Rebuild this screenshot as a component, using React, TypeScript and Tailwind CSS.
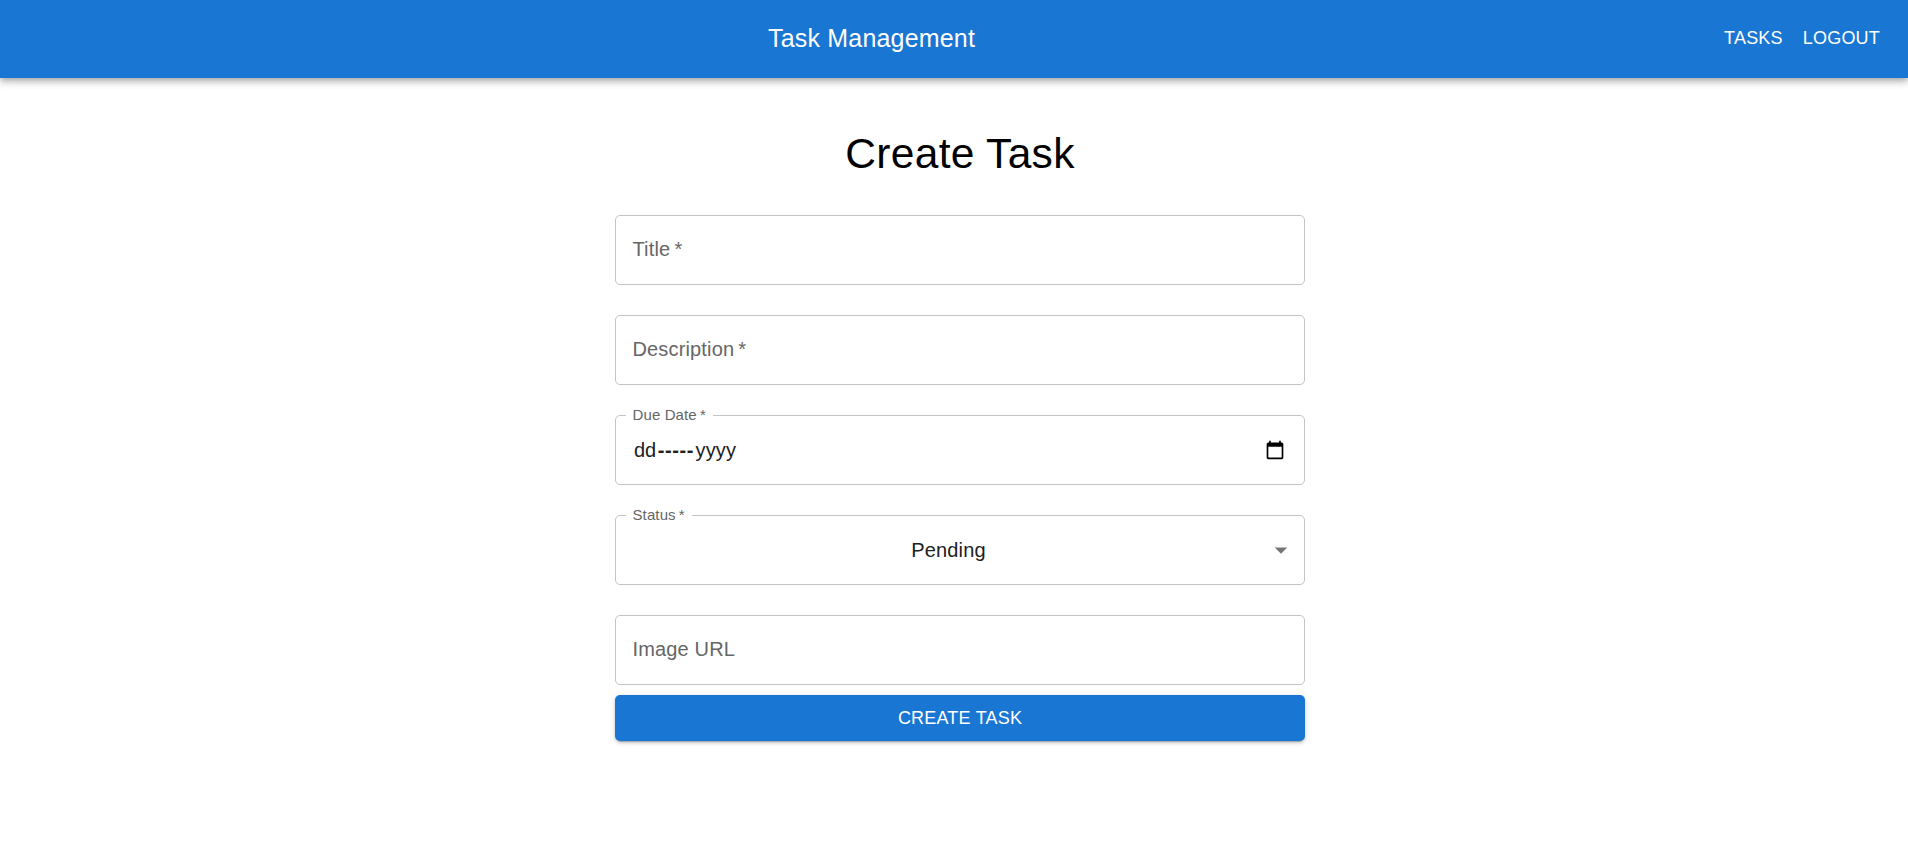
import type { ReactNode } from "react";

function Label({ text, required }: { text: string; required?: boolean }) {
  return (
    <span className="text-[20px] leading-[29px] tracking-[0.15px] text-[#666666]">
      {text}
      {required && <span>&thinsp;*</span>}
    </span>
  );
}

function EmptyField({ text, required }: { text: string; required?: boolean }) {
  return (
    <div className="h-[70px] rounded-[5px] border border-[#c4c4c4] px-[16.5px] pt-[19px]">
      <Label text={text} required={required} />
    </div>
  );
}

function FilledField({ label, children }: { label: string; children: ReactNode }) {
  return (
    <div className="relative flex h-[70px] items-center rounded-[5px] border border-[#c4c4c4] px-[17px]">
      <span className="absolute -top-[12px] left-[10px] bg-white pr-[7px] pl-[6.5px] text-[15px] leading-[22px] tracking-[0.12px] text-[#666666]">
        {label}&thinsp;*
      </span>
      {children}
    </div>
  );
}

export default function App() {
  return (
    <div className="min-h-[867px] bg-white font-['Liberation_Sans',Arial,sans-serif]">
      <header className="flex h-[78px] items-center bg-[#1976d2] pr-[28px] pb-[2px] text-white shadow-[0px_2px_5px_-1px_rgba(0,0,0,0.2),0px_5px_6px_0px_rgba(0,0,0,0.14),0px_1px_12px_0px_rgba(0,0,0,0.12)]">
        <h1 className="flex-1 pl-[19px] text-center text-[25px] leading-[40px] tracking-[0.0075em]">Task Management</h1>
        <nav className="flex gap-[20px] text-[18px] leading-[30px] tracking-[0.2px]">
          <a>TASKS</a>
          <a>LOGOUT</a>
        </nav>
      </header>
      <main className="mx-auto w-[690px] translate-x-[6px] pt-[49px]">
        <h2 className="h-[88px] text-center text-[42.5px] leading-[53px] tracking-[0.00735em] text-black">Create Task</h2>
        <form className="flex flex-col">
          <div className="flex flex-col gap-[30px]">
            <EmptyField text="Title" required />
            <EmptyField text="Description" required />
            <FilledField label="Due Date">
              <div className="flex flex-1 pl-px text-[20px] leading-[29px] text-[#212121]">
                <span>dd</span>
                <span className="pr-[1.5px] pl-[1.5px] font-bold tracking-[0.6px]">-----</span>
                <span className="tracking-[0.15px]">yyyy</span>
              </div>
              <svg className="mr-[2px] h-[20px] w-[20px]" viewBox="0 0 24 24" fill="black">
                <path d="M20 3h-1V1h-2v2H7V1H5v2H4c-1.1 0-2 .9-2 2v16c0 1.1.9 2 2 2h16c1.1 0 2-.9 2-2V5c0-1.1-.9-2-2-2zm0 18H4V8h16v13z" />
              </svg>
            </FilledField>
            <FilledField label="Status">
              <span className="flex-1 pr-[2px] text-center text-[20px] leading-[29px] tracking-[0.00938em] text-[#212121]">Pending</span>
              <svg className="-mr-[9px] h-[30px] w-[30px]" viewBox="0 0 24 24" fill="#757575">
                <path d="M7 10l5 5 5-5z" />
              </svg>
            </FilledField>
            <EmptyField text="Image URL" />
          </div>
          <button
            type="button"
            className="mt-[10px] h-[46px] rounded-[5px] bg-[#1976d2] text-[18px] leading-[30px] tracking-[0.2px] text-white shadow-[0px_4px_1px_-3px_rgba(0,0,0,0.2),0px_2px_3px_0px_rgba(0,0,0,0.14),0px_1px_6px_0px_rgba(0,0,0,0.12)]"
          >
            CREATE TASK
          </button>
        </form>
      </main>
    </div>
  );
}
